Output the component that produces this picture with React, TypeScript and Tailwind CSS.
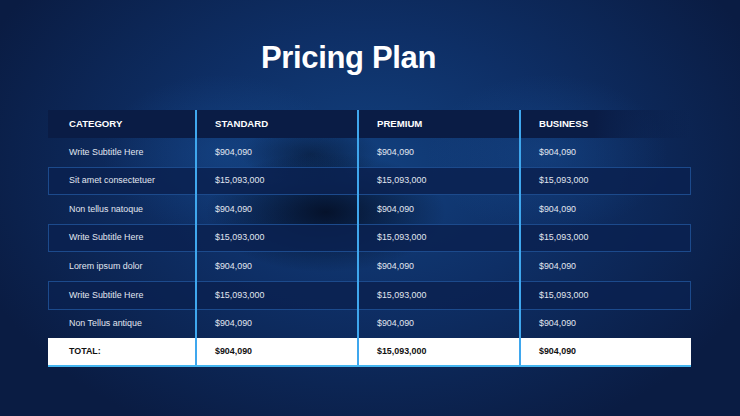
const rows = [
  { name: "Write Subtitle Here", v: ["$904,090", "$904,090", "$904,090"], boxed: false },
  { name: "Sit amet consectetuer", v: ["$15,093,000", "$15,093,000", "$15,093,000"], boxed: true },
  { name: "Non tellus natoque", v: ["$904,090", "$904,090", "$904,090"], boxed: false },
  { name: "Write Subtitle Here", v: ["$15,093,000", "$15,093,000", "$15,093,000"], boxed: true },
  { name: "Lorem ipsum dolor", v: ["$904,090", "$904,090", "$904,090"], boxed: false },
  { name: "Write Subtitle Here", v: ["$15,093,000", "$15,093,000", "$15,093,000"], boxed: true },
  { name: "Non Tellus antique", v: ["$904,090", "$904,090", "$904,090"], boxed: false },
];

const cols = "grid grid-cols-[147px_162px_162px_172px]";
const cell = "flex items-center border-l-2 border-[#3fa7ee] pl-[18px]";

export default function App() {
  return (
    <div
      className="h-[416px] w-[740px] overflow-hidden bg-[#0a1c43] font-['Liberation_Sans',Arial,sans-serif]"
      style={{
        backgroundImage:
          "radial-gradient(ellipse 120px 60px at 44% 51%, rgba(2,8,25,0.8), transparent), radial-gradient(ellipse 70px 30px at 42% 37%, rgba(2,8,25,0.45), transparent), radial-gradient(ellipse 120px 80px at 30% 37%, rgba(25,80,150,0.45), transparent), radial-gradient(ellipse 120px 80px at 74% 37%, rgba(25,80,150,0.4), transparent), radial-gradient(ellipse 420px 300px at 50% 40%, #12407e 0%, #0e2f66 45%, #0a1c43 100%)",
      }}
    >
      <div className="flex justify-center pr-[43px] pt-[42px]">
        <h1 className="text-[31px] font-bold leading-none tracking-[-0.35px] text-white">
          Pricing Plan
        </h1>
      </div>

      <div className="ml-[48px] mt-[37px] w-[643px]">
        {/* header */}
        <div className={`${cols} h-[28px] bg-[linear-gradient(to_right,#0a1c45_0%,#0a1c45_85%,rgba(10,28,69,0))] text-[9.6px] font-bold text-white`}>
          <div className="flex items-center pl-[21px]">CATEGORY</div>
          <div className={cell}>STANDARD</div>
          <div className={cell}>PREMIUM</div>
          <div className={cell}>BUSINESS</div>
        </div>

        {rows.map((r, i) => (
          <div
            key={i}
            className={`${cols} h-[28.6px] text-[8.9px] text-[#e1e6f0] ${
              r.boxed ? "bg-[#0b2150]/85 shadow-[inset_0_0_0_1px_#1c4a8c]" : ""
            }`}
          >
            <div className="flex items-center pl-[21px]">{r.name}</div>
            {r.v.map((x, j) => (
              <div key={j} className={cell}>
                {x}
              </div>
            ))}
          </div>
        ))}

        {/* total */}
        <div className={`${cols} h-[29px] border-b-2 border-[#45b6f0] bg-white text-[8.9px] font-bold text-[#111]`}>
          <div className="flex items-center pl-[21px]">TOTAL:</div>
          <div className={cell}>$904,090</div>
          <div className={cell}>$15,093,000</div>
          <div className={cell}>$904,090</div>
        </div>
      </div>
    </div>
  );
}
